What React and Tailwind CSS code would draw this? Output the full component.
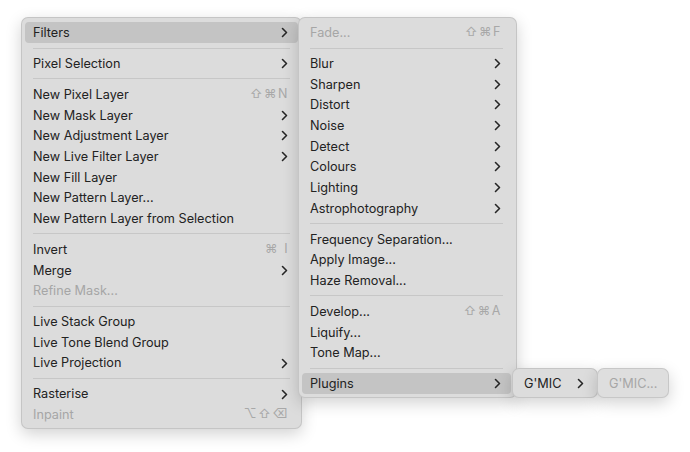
import React from 'react';

const Chevron = () => (
  <svg width="7" height="11" viewBox="0 0 7 11" className="shrink-0">
    <path d="M1.5 1.5 L5.5 5.5 L1.5 9.5" fill="none" stroke="#262626" strokeWidth="1.6" strokeLinecap="round" strokeLinejoin="round" />
  </svg>
);

const Item = ({ label, shortcut, sub, disabled, active }) => (
  <div
    className={`flex items-center justify-between h-[20.67px] pl-[8px] pr-[10px] rounded-[4px] ${
      active ? 'bg-[#c4c4c4]' : ''
    }`}
  >
    <span className={disabled ? 'text-[#a6a6a6]' : 'text-[#222222]'}>{label}</span>
    {sub && <Chevron />}
    {shortcut && (
      <span className="text-[#a8a8a8] text-[12.5px] tracking-[1.5px] -mr-[1px]">{shortcut}</span>
    )}
  </div>
);

const Sep = ({ className = '' }) => (
  <div className={`h-[10.33px] flex items-center px-[8px] ${className}`}>
    <div className="h-px w-full bg-[#c7c7c7]" />
  </div>
);

const Menu = ({ className = '', children }) => (
  <div
    className={`bg-[#dcdcdc] border border-black/10 rounded-[7px] shadow-[0_5px_16px_rgba(0,0,0,0.18)] pt-[4.2px] pb-[3.4px] px-[3px] ${className}`}
  >
    {children}
  </div>
);

export default function App() {
  return (
    <div
      className="w-[690px] h-[452px] bg-white pl-[21px] pt-[17px] flex items-start text-[12.7px]"
      style={{ fontFamily: 'Inter, "Noto Sans", "DejaVu Sans", sans-serif' }}
    >
      <Menu className="w-[281px] shrink-0">
        <Item label="Filters" sub active />
        <Sep />
        <Item label="Pixel Selection" sub />
        <Sep />
        <Item label="New Pixel Layer" shortcut="⇧⌘N" />
        <Item label="New Mask Layer" sub />
        <Item label="New Adjustment Layer" sub />
        <Item label="New Live Filter Layer" sub />
        <Item label="New Fill Layer" />
        <Item label="New Pattern Layer..." />
        <Item label="New Pattern Layer from Selection" />
        <Sep />
        <Item label="Invert" shortcut="⌘ I" />
        <Item label="Merge" sub />
        <Item label="Refine Mask..." disabled />
        <Sep />
        <Item label="Live Stack Group" />
        <Item label="Live Tone Blend Group" />
        <Item label="Live Projection" sub />
        <Sep />
        <Item label="Rasterise" sub />
        <Item label="Inpaint" disabled shortcut="⌥⇧⌫" />
      </Menu>

      <Menu className="w-[219px] shrink-0 -ml-[4px] pr-[5px]">
        <Item label="Fade..." disabled shortcut="⇧⌘F" />
        <Sep />
        <Item label="Blur" sub />
        <Item label="Sharpen" sub />
        <Item label="Distort" sub />
        <Item label="Noise" sub />
        <Item label="Detect" sub />
        <Item label="Colours" sub />
        <Item label="Lighting" sub />
        <Item label="Astrophotography" sub />
        <Sep />
        <Item label="Frequency Separation..." />
        <Item label="Apply Image..." />
        <Item label="Haze Removal..." />
        <Sep />
        <Item label="Develop..." shortcut="⇧⌘A" />
        <Item label="Liquify..." />
        <Item label="Tone Map..." />
        <Sep />
        <Item label="Plugins" sub active />
      </Menu>

      <Menu className="w-[86px] shrink-0 -ml-[5px] mt-[351px]">
        <Item label="G'MIC" sub />
      </Menu>

      <Menu className="w-[72px] shrink-0 -ml-[1px] mt-[351px] bg-[#dedede]">
        <Item label="G'MIC..." disabled />
      </Menu>
    </div>
  );
}
